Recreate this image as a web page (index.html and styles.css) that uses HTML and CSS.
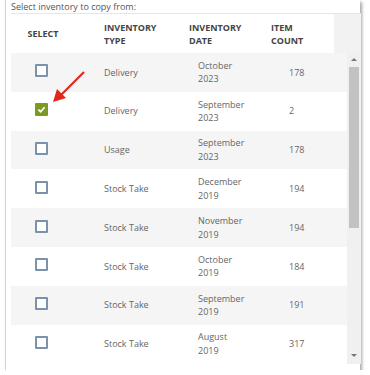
FILE: index.html
```html
<!DOCTYPE html>
<html>
<head>
  <meta name="viewport" content="width=device-width, initial-scale=1">
  <link rel="stylesheet" href="styles.css">
</head>
<body>
  <div class="card">
    <p class="caption">Select inventory to copy from:</p>
    <div class="head">
      <div class="head-row">
        <div class="hcell sel">SELECT</div>
        <div class="hcell type">INVENTORY<br>TYPE</div>
        <div class="hcell date">INVENTORY<br>DATE</div>
        <div class="hcell count">ITEM<br>COUNT</div>
      </div>
      <div class="gutter"></div>
    </div>
    <div class="body">
      <div class="rows">
        <div class="row"><div class="sel"><span class="box"></span></div><div class="type">Delivery</div><div class="date">October<br>2023</div><div class="count">178</div></div>
        <div class="row"><div class="sel"><span class="box checked"><svg viewBox="0 0 10 10" width="9" height="9"><polyline points="1.5,5.2 4,7.5 8.5,2.5" fill="none" stroke="#fff" stroke-width="2"/></svg></span></div><div class="type">Delivery</div><div class="date">September<br>2023</div><div class="count">2</div></div>
        <div class="row"><div class="sel"><span class="box"></span></div><div class="type">Usage</div><div class="date">September<br>2023</div><div class="count">178</div></div>
        <div class="row"><div class="sel"><span class="box"></span></div><div class="type">Stock Take</div><div class="date">December<br>2019</div><div class="count">194</div></div>
        <div class="row"><div class="sel"><span class="box"></span></div><div class="type">Stock Take</div><div class="date">November<br>2019</div><div class="count">194</div></div>
        <div class="row"><div class="sel"><span class="box"></span></div><div class="type">Stock Take</div><div class="date">October<br>2019</div><div class="count">184</div></div>
        <div class="row"><div class="sel"><span class="box"></span></div><div class="type">Stock Take</div><div class="date">September<br>2019</div><div class="count">191</div></div>
        <div class="row"><div class="sel"><span class="box"></span></div><div class="type">Stock Take</div><div class="date">August<br>2019</div><div class="count">317</div></div>
      </div>
      <div class="scrollbar">
        <span class="arrow-up"></span>
        <div class="thumb"></div>
        <span class="arrow-down"></span>
      </div>
    </div>
    <svg class="pointer" width="40" height="40" viewBox="0 0 40 40">
      <line x1="34" y1="2" x2="10" y2="26" stroke="#e3261c" stroke-width="2.2"/>
      <polygon points="3,32 7,19 16,28" fill="#e3261c"/>
    </svg>
  </div>
</body>
</html>
```
FILE: styles.css
```css
body {
  margin: 0;
  padding: 0;
  background: #fff;
  font-family: "Open Sans", Arial, sans-serif;
}
.card {
  position: relative;
  margin-left: 5px;
  width: 355px;
  height: 370px;
  padding-left: 5px;
  box-sizing: border-box;
  border-left: 1px solid #d4d4d4;
  box-shadow: 2px 2px 3px rgba(0, 0, 0, 0.35);
  background: #fff;
}
.caption {
  margin: 0;
  font-size: 9px;
  line-height: 13px;
  color: #555;
}
.head {
  display: flex;
  width: 350px;
  height: 39px;
  border-top: 1px solid #e6e6e6;
}
.head-row {
  width: 323px;
  display: grid;
  grid-template-columns: 64px 104px 82px 1fr;
  align-items: center;
  background: #fff;
}
.gutter {
  flex: 1;
  background: #f2f2f2;
}
.hcell {
  font-size: 9px;
  font-weight: bold;
  line-height: 13px;
  color: #444;
}
.hcell.sel {
  text-align: center;
}
.hcell.type {
  padding-left: 29px;
}
.hcell.date {
  padding-left: 10px;
}
.hcell.count {
  padding-left: 10px;
}
.body {
  display: flex;
  width: 350px;
  height: 311px;
}
.rows {
  width: 336px;
  overflow: hidden;
}
.row {
  display: grid;
  grid-template-columns: 64px 104px 82px 1fr;
  align-items: center;
  height: 38.8px;
  font-size: 9px;
  line-height: 13.5px;
  color: #666;
}
.row:nth-child(odd) {
  background: #f5f5f5;
}
.row .sel {
  display: flex;
  justify-content: center;
  padding-right: 4px;
}
.row .type {
  padding-left: 29px;
}
.row .date {
  padding-left: 19px;
}
.row .count {
  padding-left: 28px;
}
.box {
  display: flex;
  align-items: center;
  justify-content: center;
  width: 13px;
  height: 13px;
  box-sizing: border-box;
  border: 2px solid #7c92aa;
  border-radius: 1px;
  background: #fff;
  margin-top: -3px;
}
.box.checked {
  background: #7b9a20;
  border-color: #7b9a20;
}
.scrollbar {
  position: relative;
  flex: 1;
  background: #f0f0f0;
  display: flex;
  flex-direction: column;
  align-items: center;
}
.arrow-up {
  margin-top: 5px;
  border-left: 3px solid transparent;
  border-right: 3px solid transparent;
  border-bottom: 3px solid #777;
}
.thumb {
  margin-top: 6px;
  width: 10px;
  height: 161px;
  background: #c2c2c2;
}
.arrow-down {
  margin-top: auto;
  margin-bottom: 7px;
  border-left: 3px solid transparent;
  border-right: 3px solid transparent;
  border-top: 3px solid #777;
}
.pointer {
  position: absolute;
  left: 44px;
  top: 70px;
}
```
